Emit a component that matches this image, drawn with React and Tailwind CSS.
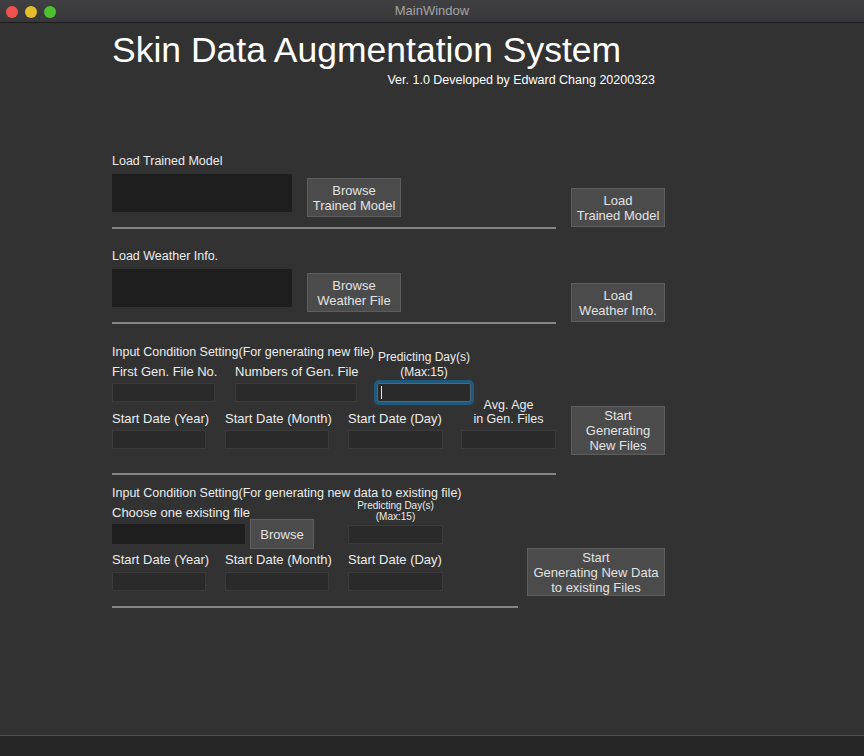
import React from "react";

function Btn({ className = "", children }) {
  return (
    <div
      className={
        "flex items-center justify-center text-center bg-[#4b4b4b] border border-[#5e5e5e] text-[#e2e2e2] text-[13px] leading-[15px] " +
        className
      }
    >
      <div>{children}</div>
    </div>
  );
}

function Field({ className = "" }) {
  return <div className={"h-[19px] bg-[#2a2a2a] border border-[#3b3b3b] " + className} />;
}

function Sep({ className = "" }) {
  return <div className={"h-[2px] bg-[#858585] " + className} />;
}

function Label({ children, className = "" }) {
  return <div className={"h-[16px] text-[13px] leading-[16px] text-[#ececec] whitespace-nowrap " + className}>{children}</div>;
}

function Heading({ children }) {
  return <div className="h-[16px] text-[12.5px] leading-[16px] text-[#ececec] whitespace-nowrap">{children}</div>;
}

function LoadSection({ label, browse, load, first }) {
  return (
    <div className={"flex " + (first ? "mt-[65px]" : "mt-[19px]")}>
      <div className="w-[444px]">
        <Heading>{label}</Heading>
        <div className="flex items-start mt-[5px]">
          <div className="w-[180px] h-[38px] bg-[#1e1e1e]" />
          <Btn className="ml-[15px] mt-[4px] w-[94px] h-[39px]">{browse}</Btn>
        </div>
        <Sep className="mt-[10px]" />
      </div>
      <Btn className="ml-[15px] mt-[35px] w-[94px] h-[39px]">{load}</Btn>
    </div>
  );
}

export default function App() {
  return (
    <div className="w-[864px] h-[756px] overflow-hidden bg-[#323232] font-['Liberation_Sans',Arial,sans-serif] select-none">
      {/* Title bar */}
      <div className="h-[22px] grid grid-cols-[1fr_auto_1fr] items-center bg-gradient-to-b from-[#404042] to-[#38383a] border-b border-[#1c1c1c] box-content">
        <div className="flex items-center gap-[7px] pl-[6px] pt-[1px]">
          <div className="w-[12px] h-[12px] rounded-full bg-[#f0534f]" />
          <div className="w-[12px] h-[12px] rounded-full bg-[#e6be2c]" />
          <div className="w-[12px] h-[12px] rounded-full bg-[#4fc131]" />
        </div>
        <div className="text-[13px] text-[#a3a3a3] leading-[22px]">MainWindow</div>
        <div />
      </div>

      {/* Body */}
      <div className="h-[712px] pl-[112px] flex flex-col">
        <div className="mt-[7px] h-[40px] text-[35.5px] leading-[40px] text-white whitespace-nowrap">
          Skin Data Augmentation System
        </div>
        <div className="mt-[2px] w-[543px] h-[16px] text-right text-[12.5px] leading-[16px] text-white whitespace-nowrap">
          Ver. 1.0 Developed by Edward Chang 20200323
        </div>

        <LoadSection first label="Load Trained Model" browse={<>Browse<br />Trained Model</>} load={<>Load<br />Trained Model</>} />
        <LoadSection label="Load Weather Info." browse={<>Browse<br />Weather File</>} load={<>Load<br />Weather Info.</>} />

        {/* Section 3 */}
        <div className="flex mt-[20px]">
          <div className="w-[444px]">
            <div className="flex items-end">
              <div className="w-[263px]">
                <Heading>Input Condition Setting(For generating new file)</Heading>
                <div className="flex mt-[4px]">
                  <div className="w-[103px]">
                    <Label>First Gen. File No.</Label>
                    <Field className="mt-[3px]" />
                  </div>
                  <div className="ml-[20px] w-[122px]">
                    <Label>Numbers of Gen. File</Label>
                    <Field className="mt-[3px]" />
                  </div>
                </div>
              </div>
              <div className="w-[98px]">
                <div className="text-center text-[12px] leading-[15px] text-[#ececec] whitespace-nowrap">
                  Predicting Day(s)
                  <br />
                  (Max:15)
                </div>
                <div className="mt-[3px] ml-[2px] w-[94px] h-[19px] bg-[#2a2a2a] border border-[#4a6a80] rounded-[2px] shadow-[0_0_0_3px_#1f5a7e] flex items-center pl-[3px]">
                  <div className="w-px h-[13px] bg-[#e8e8e8]" />
                </div>
              </div>
            </div>
            <div className="flex items-end -mt-[4px]">
              <div className="w-[94px]">
                <Label>Start Date (Year)</Label>
                <Field className="mt-[3px]" />
              </div>
              <div className="ml-[19px] w-[104px]">
                <Label>Start Date (Month)</Label>
                <Field className="mt-[3px]" />
              </div>
              <div className="ml-[19px] w-[95px]">
                <Label>Start Date (Day)</Label>
                <Field className="mt-[3px]" />
              </div>
              <div className="ml-[18px] w-[95px]">
                <div className="text-center text-[12.5px] leading-[14px] text-[#ececec] whitespace-nowrap">
                  Avg. Age
                  <br />
                  in Gen. Files
                </div>
                <Field className="mt-[4px]" />
              </div>
            </div>
            <Sep className="mt-[24px]" />
          </div>
          <Btn className="ml-[15px] mt-[62px] w-[94px] h-[49px]">
            Start
            <br />
            Generating
            <br />
            New Files
          </Btn>
        </div>

        {/* Section 4 */}
        <div className="flex mt-[10px]">
          <div className="w-[406px]">
            <Heading>Input Condition Setting(For generating new data to existing file)</Heading>
            <div className="flex items-start mt-[4px]">
              <div className="w-[236px]">
                <Label>Choose one existing file</Label>
                <div className="flex items-start -mt-[2px]">
                  <div className="mt-[5px] w-[133px] h-[20px] bg-[#1e1e1e]" />
                  <Btn className="ml-[5px] w-[64px] h-[30px]">Browse</Btn>
                </div>
              </div>
              <div className="w-[95px] -mt-[5px]">
                <div className="text-center text-[10px] leading-[11px] text-[#ececec] whitespace-nowrap">
                  Predicting Day(s)
                  <br />
                  (Max:15)
                </div>
                <Field className="mt-[3px]" />
              </div>
            </div>
            <div className="flex items-end mt-[3px]">
              <div className="w-[94px]">
                <Label>Start Date (Year)</Label>
                <Field className="mt-[4px]" />
              </div>
              <div className="ml-[19px] w-[104px]">
                <Label>Start Date (Month)</Label>
                <Field className="mt-[4px]" />
              </div>
              <div className="ml-[19px] w-[95px]">
                <Label>Start Date (Day)</Label>
                <Field className="mt-[4px]" />
              </div>
            </div>
            <Sep className="mt-[15px]" />
          </div>
          <Btn className="ml-[9px] mt-[63px] w-[138px] h-[48px] text-[12.5px]">
            Start
            <br />
            Generating New Data
            <br />
            to existing Files
          </Btn>
        </div>
      </div>

      {/* Bottom strip */}
      <div className="h-[21px] bg-[#262626] border-t border-[#4e4e4e]" />
    </div>
  );
}
